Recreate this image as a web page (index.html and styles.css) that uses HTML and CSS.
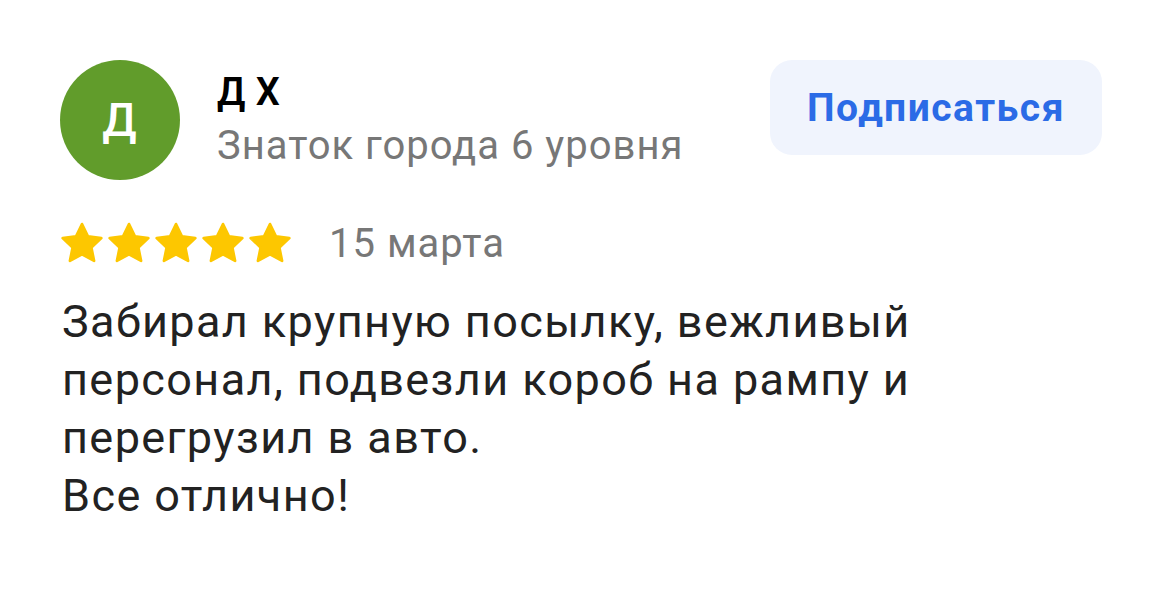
FILE: index.html
```html
<!DOCTYPE html>
<html lang="ru">
<head>
  <meta charset="UTF-8" />
  <title>Отзыв</title>
  <link rel="stylesheet" href="styles.css">
</head>
<body>
  <div class="review">
    <div class="header">
      <div class="avatar">Д</div>
      <div class="author">
        <div class="name">Д Х</div>
        <div class="level">Знаток города 6 уровня</div>
      </div>
      <button class="subscribe">Подписаться</button>
    </div>
    <div class="meta">
      <div class="stars">
        <svg viewBox="0 0 24 24"><path d="M12 1.6l3.1 6.4 7 .9-5.2 4.9 1.4 7L12 17.4l-6.3 3.4 1.4-7-5.2-4.9 7-.9z"/></svg>
        <svg viewBox="0 0 24 24"><path d="M12 1.6l3.1 6.4 7 .9-5.2 4.9 1.4 7L12 17.4l-6.3 3.4 1.4-7-5.2-4.9 7-.9z"/></svg>
        <svg viewBox="0 0 24 24"><path d="M12 1.6l3.1 6.4 7 .9-5.2 4.9 1.4 7L12 17.4l-6.3 3.4 1.4-7-5.2-4.9 7-.9z"/></svg>
        <svg viewBox="0 0 24 24"><path d="M12 1.6l3.1 6.4 7 .9-5.2 4.9 1.4 7L12 17.4l-6.3 3.4 1.4-7-5.2-4.9 7-.9z"/></svg>
        <svg viewBox="0 0 24 24"><path d="M12 1.6l3.1 6.4 7 .9-5.2 4.9 1.4 7L12 17.4l-6.3 3.4 1.4-7-5.2-4.9 7-.9z"/></svg>
      </div>
      <span class="date">15 марта</span>
    </div>
    <p class="text">Забирал крупную посылку, вежливый<br>персонал, подвезли короб на рампу и<br>перегрузил в авто.<br>Все отлично!</p>
  </div>
</body>
</html>
```

FILE: styles.css
```css
body {
  margin: 0;
  background: #fff;
  font-family: Roboto, "Noto Sans", sans-serif;
  color: #222;
}
.review {
  padding: 60px 60px 0 62px;
  width: 1040px;
}
.header {
  display: flex;
  align-items: flex-start;
}
.avatar {
  width: 120px;
  height: 120px;
  border-radius: 50%;
  background: #619c2b;
  color: #fff;
  font-size: 46px;
  font-weight: 500;
  letter-spacing: 1px;
  display: flex;
  align-items: center;
  justify-content: center;
  flex-shrink: 0;
  margin-left: -2px;
}
.author {
  margin-left: 37px;
  flex: 1;
  padding-top: 10px;
}
.name {
  font-size: 38px;
  font-weight: 600;
  letter-spacing: 0.5px;
  color: #000;
  line-height: 44px;
}
.level {
  font-size: 40px;
  letter-spacing: 1px;
  color: #777;
  line-height: 52px;
  margin-top: 6px;
}
.subscribe {
  width: 332px;
  height: 95px;
  border: none;
  border-radius: 22px;
  background: #f0f4fd;
  color: #2b6be6;
  font-family: Roboto, sans-serif;
  font-size: 39px;
  font-weight: 700;
  letter-spacing: 1.5px;
  cursor: pointer;
}
.meta {
  display: flex;
  align-items: center;
  margin-top: 40px;
}
.stars {
  display: flex;
  gap: 1px;
  margin-left: -3px;
}
.stars svg {
  width: 46px;
  height: 46px;
  fill: #fdc700;
  stroke: #fdc700;
  stroke-width: 1.4;
  stroke-linejoin: round;
}
.date {
  margin-left: 36px;
  font-size: 40px;
  letter-spacing: 1px;
  color: #777;
}
.text {
  margin: 26px 0 0;
  font-size: 45px;
  letter-spacing: 1.4px;
  line-height: 58px;
  color: #222;
}
```
